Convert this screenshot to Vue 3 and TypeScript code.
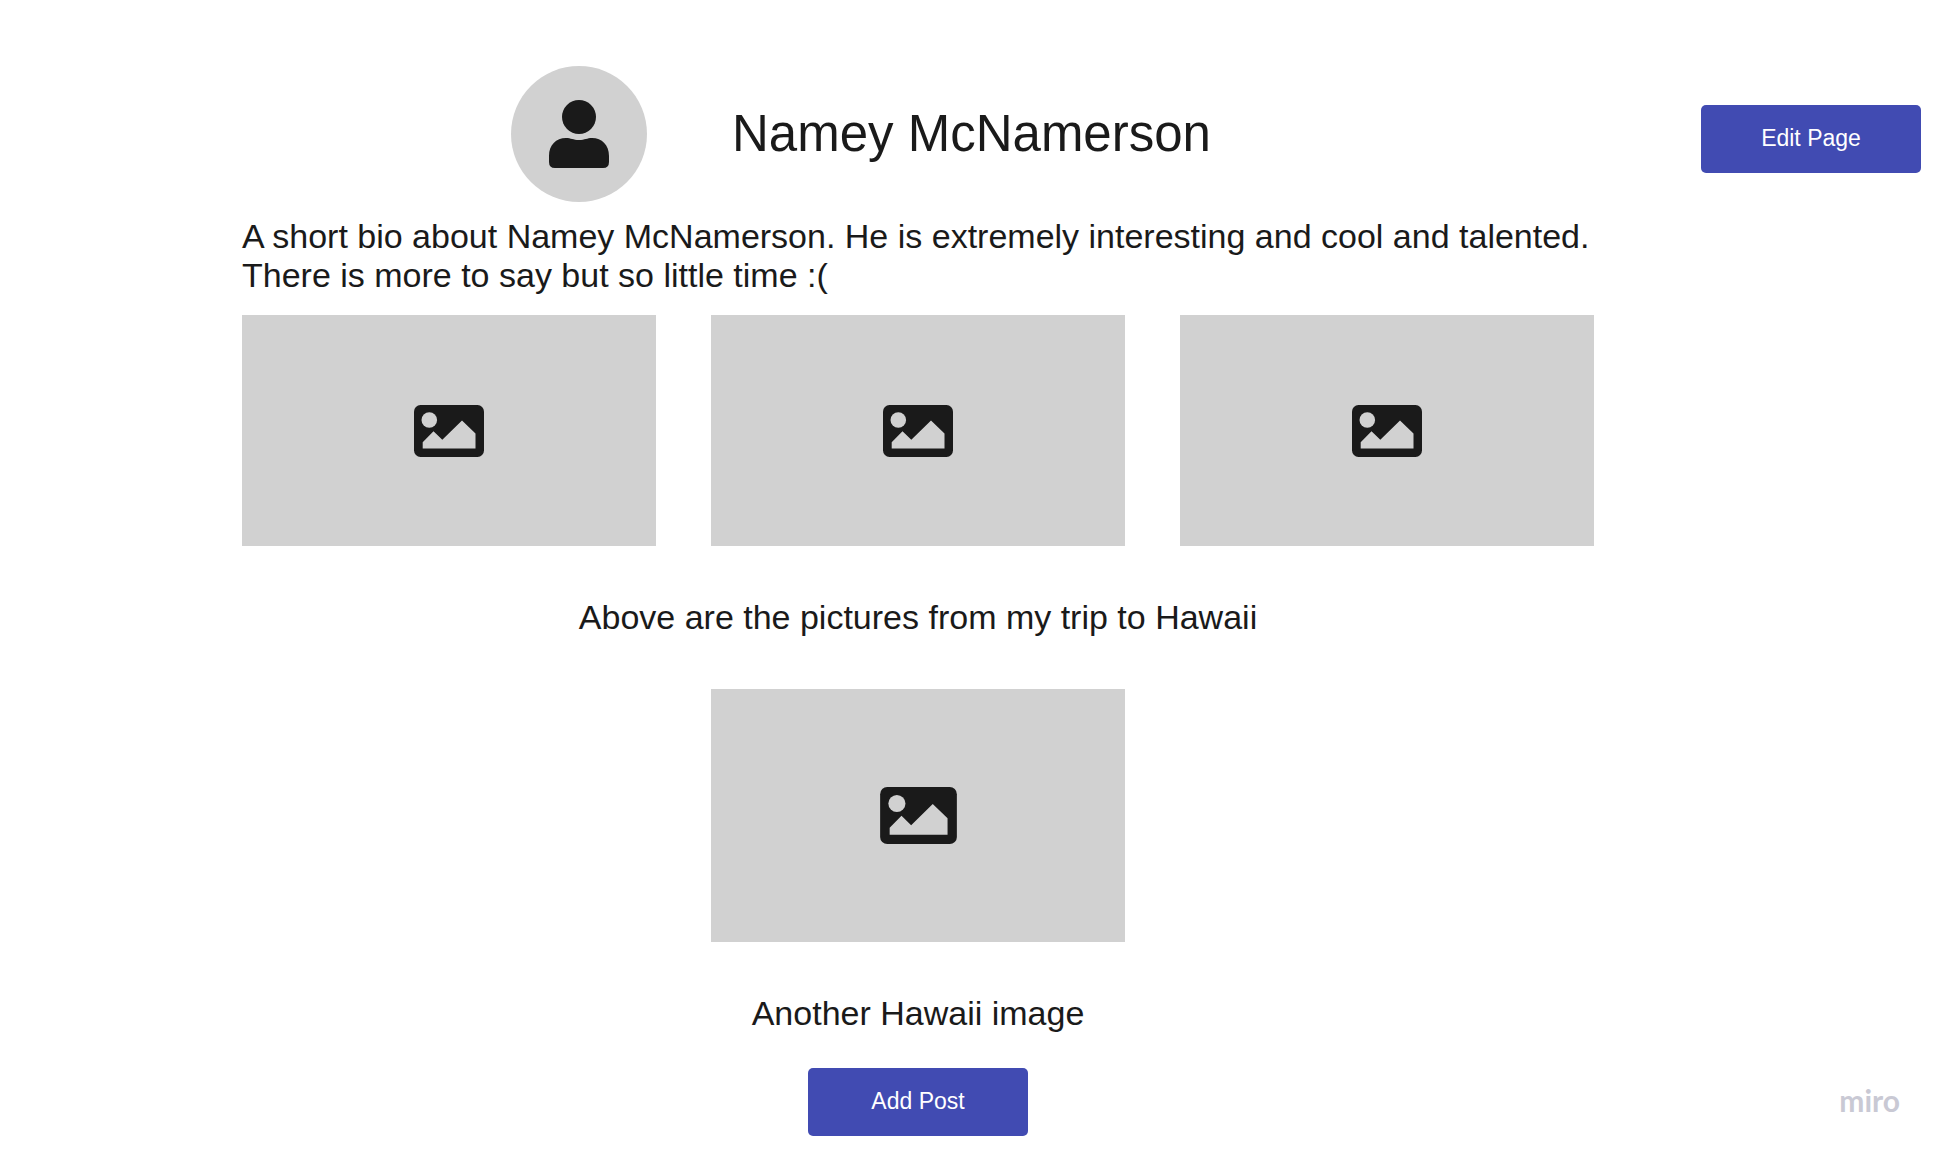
<script setup lang="ts">
interface Post {
  id: number
  pictures: number
  caption: string
  large: boolean
}

const name = 'Namey McNamerson'
const bio: string[] = [
  `A short bio about ${name}. He is extremely interesting and cool and talented.`,
  'There is more to say but so little time :(',
]

const posts: Post[] = [
  { id: 1, pictures: 3, caption: 'Above are the pictures from my trip to Hawaii', large: false },
  { id: 2, pictures: 1, caption: 'Another Hawaii image', large: true },
]
</script>

<template>
  <div class="page">
    <header class="profile">
      <svg class="avatar" viewBox="0 0 136 136" role="img" aria-label="Profile picture">
        <circle class="backdrop" cx="68" cy="68" r="68" />
        <circle cx="68" cy="51" r="17" />
        <path d="M38 90C38 79 45 72 55 72C60 72 62 74 68 74C74 74 76 72 81 72C91 72 98 79 98 90V96Q98 102 92 102H44Q38 102 38 96Z" />
      </svg>
      <h1>{{ name }}</h1>
    </header>
    <button class="action edit" type="button">Edit Page</button>

    <p class="bio">
      <template v-for="(line, i) in bio" :key="i"><br v-if="i > 0">{{ line }}</template>
    </p>

    <main class="posts">
      <figure v-for="post in posts" :key="post.id" class="post" :class="{ large: post.large }">
        <div class="pictures">
          <div v-for="n in post.pictures" :key="n" class="picture">
            <svg viewBox="0 0 70 52" role="img" aria-label="Picture">
              <rect width="70" height="52" rx="6.5" />
              <circle class="cutout" cx="15.3" cy="15" r="7.8" />
              <path class="cutout" d="M8.7 43.5V37.2L19.5 26.3L28.3 34.8L48 15.6L61.5 28.5V43.5Z" />
            </svg>
          </div>
        </div>
        <figcaption>{{ post.caption }}</figcaption>
      </figure>
    </main>

    <button class="action add" type="button">Add Post</button>
    <span class="brand">miro</span>
  </div>
</template>

<style>
body {
  margin: 0;
  background: #fff;
}
</style>

<style scoped>
.page {
  display: grid;
  grid-template-columns: 242fr minmax(0, 1352fr) 350fr;
  padding: 66px 0 20px;
  color: #1a1a1a;
  font-family: "Liberation Sans", Arial, sans-serif;
}

.profile {
  grid-column: 2;
  display: flex;
  align-items: center;
  gap: 85px;
  padding-left: 269px;
}

.avatar {
  flex: none;
  width: 136px;
  height: 136px;
  fill: #1a1a1a;
}

.avatar .backdrop {
  fill: #d1d1d1;
}

h1 {
  margin: 0;
  font-size: 51px;
  font-weight: 400;
  line-height: 60px;
  white-space: nowrap;
}

.action {
  width: 220px;
  height: 68px;
  padding: 0 0 2px;
  border: 0;
  border-radius: 5px;
  background: #414bb2;
  color: #fff;
  font-family: inherit;
  font-size: 23px;
  line-height: 26px;
  cursor: pointer;
}

.edit {
  grid-column: 3;
  justify-self: end;
  margin: 39px 23px 0 0;
}

.bio {
  grid-column: 2 / -1;
  margin: 15px 0 20px;
  font-size: 34px;
  line-height: 39px;
}

.posts {
  grid-column: 2;
  display: flex;
  flex-direction: column;
  gap: 52px;
  margin-bottom: 35px;
}

.post {
  display: flex;
  flex-direction: column;
  gap: 52px;
  margin: 0;
}

.pictures {
  display: flex;
  justify-content: center;
  gap: 55px;
}

.picture {
  box-sizing: border-box;
  flex: 0 1 414px;
  display: flex;
  align-items: center;
  justify-content: center;
  height: 231px;
  background: #d1d1d1;
}

.picture svg {
  width: 70px;
  height: 52px;
  fill: #1a1a1a;
}

.picture .cutout {
  fill: #d1d1d1;
}

.large .picture {
  height: 253px;
}

.large .picture svg {
  width: 77px;
  height: 57px;
}

figcaption {
  font-size: 34px;
  line-height: 39px;
  text-align: center;
}

.add {
  grid-column: 2;
  justify-self: center;
}

.brand {
  grid-column: 3;
  align-self: center;
  justify-self: end;
  margin: 0 44px 4px 0;
  color: #c9c9d4;
  font-family: Lato, sans-serif;
  font-size: 30px;
  font-weight: 700;
  line-height: 36px;
}
</style>
